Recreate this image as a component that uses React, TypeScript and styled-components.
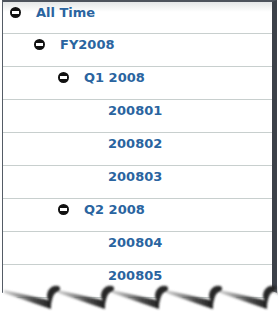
import React from "react";
import styled, { createGlobalStyle } from "styled-components";

interface Node {
  label: string;
  level: number;
  open?: boolean;
}

const nodes: Node[] = [
  { label: "All Time", level: 0, open: true },
  { label: "FY2008", level: 1, open: true },
  { label: "Q1 2008", level: 2, open: true },
  { label: "200801", level: 3 },
  { label: "200802", level: 3 },
  { label: "200803", level: 3 },
  { label: "Q2 2008", level: 2, open: true },
  { label: "200804", level: 3 },
  { label: "200805", level: 3 },
];

const GlobalStyle = createGlobalStyle`
  body {
    margin: 0;
    background: #ffffff;
    font-family: "DejaVu Sans", Verdana, sans-serif;
  }
`;

const Viewport = styled.div`
  position: relative;
  width: 278px;
  height: 316px;
  overflow: hidden;
  background: #ffffff;
`;

const Frame = styled.div`
  box-sizing: border-box;
  margin-left: 2px;
  width: 275px;
  height: 330px;
  border-top: 2px solid #4d535c;
  border-left: 1px solid #555c66;
  border-right: 5px solid #3c4149;
  display: flex;
  flex-direction: column;
`;

const Row = styled.div<{ $level: number; $first?: boolean }>`
  box-sizing: border-box;
  flex: none;
  height: ${(p) => (p.$first ? 32 : 33)}px;
  padding: 3px 0 0 ${(p) => 7 + p.$level * 24}px;
  border-bottom: 1px solid #c8cfce;
  display: flex;
  align-items: flex-start;
  gap: 15px;
  background: ${(p) =>
    p.$first ? "linear-gradient(#e4e6e7 0px, #ffffff 10px)" : "#ffffff"};
`;

const Toggle = styled.span<{ $hidden?: boolean }>`
  flex: none;
  position: relative;
  width: 11px;
  height: 11px;
  margin-top: 2px;
  border-radius: 50%;
  background: ${(p) => (p.$hidden ? "transparent" : "#111111")};

  &::after {
    content: "";
    display: ${(p) => (p.$hidden ? "none" : "block")};
    position: absolute;
    left: 2px;
    right: 2px;
    top: 4px;
    height: 3px;
    background: #ffffff;
  }
`;

const Label = styled.span`
  font-size: 13px;
  line-height: 16px;
  font-weight: bold;
  color: #2a64a0;
  white-space: nowrap;
`;

const Tear = styled.svg`
  position: absolute;
  left: 0;
  bottom: 0;
  display: block;
`;

const TornEdge = () => {
  const starts = [-4, 50, 104, 158, 212, 266];
  let edge = "M0,36 L0,12";
  starts.forEach((a) => {
    const b = a + 54;
    edge += ` L${b},28 C${b + 1},22 ${b + 1},14 ${b + 6},11`;
  });
  edge += " L278,14 L278,36 Z";

  return (
    <Tear width={278} height={36} viewBox="0 0 278 36">
      <defs>
        <filter id="soft" x="-10%" y="-50%" width="120%" height="200%">
          <feGaussianBlur stdDeviation="0.8" />
        </filter>
        <linearGradient id="band" x1="0" y1="0" x2="1" y2="0">
          <stop offset="0" stopColor="#8a8a8a" stopOpacity="0.4" />
          <stop offset="0.6" stopColor="#3a3a3a" stopOpacity="0.9" />
          <stop offset="1" stopColor="#1e1e1e" stopOpacity="1" />
        </linearGradient>
      </defs>
      <path d={edge} fill="#ffffff" />
      <g filter="url(#soft)">
        {starts.map((a) => {
          const b = a + 54;
          return (
            <g key={a}>
              <path
                d={`M${a + 8},10 L${b - 2},20 L${b + 1},22 L${b + 1},29 L${a + 8},13 Z`}
                fill="url(#band)"
              />
              <path
                d={`M${b - 3},17 C${b - 3},9 ${b + 2},5 ${b + 8},6 C${b + 11},7 ${b + 11},11 ${b + 7},12 C${b + 3},13 ${b + 2},20 ${b + 1},25 Z`}
                fill="#262626"
              />
            </g>
          );
        })}
      </g>
    </Tear>
  );
};

const App = () => {
  return (
    <Viewport>
      <GlobalStyle />
      <Frame>
        {nodes.map((n, i) => (
          <Row key={n.label} $level={n.level} $first={i === 0}>
            <Toggle $hidden={!n.open} />
            <Label>{n.label}</Label>
          </Row>
        ))}
      </Frame>
      <TornEdge />
    </Viewport>
  );
};

export default App;
